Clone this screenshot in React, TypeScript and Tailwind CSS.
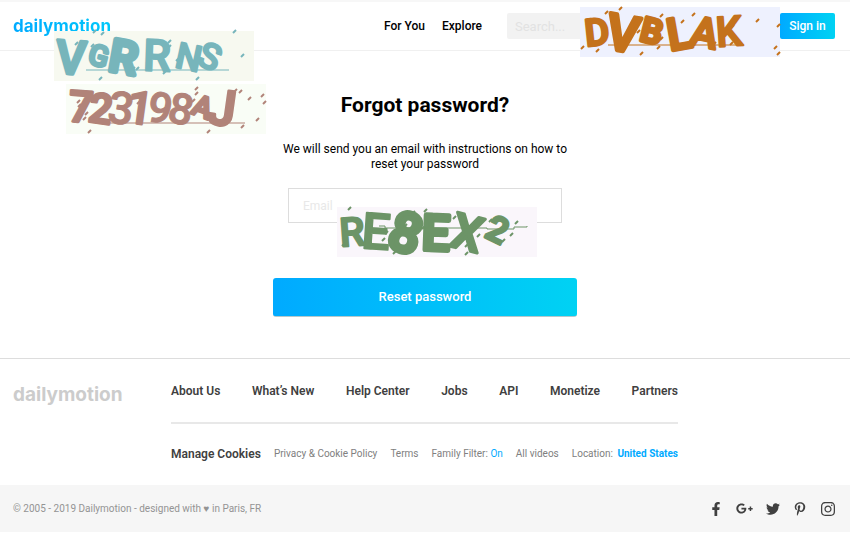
import React from "react";
import { FaFacebookF, FaGooglePlusG, FaInstagram, FaPinterestP, FaTwitter } from "react-icons/fa";

type Glyph = { c: string; x: number; y: number; size: number; turn: number; weight: number };

type Scribble = {
  place: string;
  background: string;
  color: string;
  label: string;
  glyphs: Glyph[];
  line: string;
  dots: [number, number][];
};

const scribbles: Scribble[] = [
  {
    place: "left-[54px] top-[31px]",
    background: "#f7f9f0",
    color: "#77b5bb",
    label: "VGRRNS",
    glyphs: [
      { c: "V", x: 17, y: 26, size: 50, turn: 4, weight: 3 },
      { c: "G", x: 45, y: 24, size: 32, turn: 14, weight: 3 },
      { c: "R", x: 70, y: 25, size: 50, turn: 10, weight: 5 },
      { c: "R", x: 103, y: 25, size: 46, turn: 2, weight: 2 },
      { c: "N", x: 135, y: 26, size: 38, turn: 12, weight: 2 },
      { c: "S", x: 156, y: 25, size: 38, turn: 22, weight: 2 },
    ],
    line: "M32 39H175",
    dots: [[40, 1], [48, 3], [22, 13], [28, 19], [38, 15], [46, 48], [79, 38], [83, 38], [110, 42], [115, 11], [115, 16], [123, 29], [188, 25], [180, 1], [143, 48], [165, 22]],
  },
  {
    place: "left-[66px] top-[84px]",
    background: "#f9fdf6",
    color: "#b18379",
    label: "7231984J",
    glyphs: [
      { c: "7", x: 15, y: 23, size: 46, turn: 4, weight: 3 },
      { c: "2", x: 35, y: 24, size: 44, turn: 8, weight: 3 },
      { c: "3", x: 55, y: 25, size: 46, turn: 8, weight: 1 },
      { c: "1", x: 74, y: 24, size: 48, turn: 8, weight: 2 },
      { c: "9", x: 94, y: 24, size: 44, turn: 12, weight: 1 },
      { c: "8", x: 115, y: 25, size: 44, turn: 12, weight: 1 },
      { c: "A", x: 137, y: 22, size: 32, turn: 20, weight: 3 },
      { c: "J", x: 156, y: 24, size: 52, turn: 8, weight: 3 },
    ],
    line: "M40 39H179",
    dots: [[12, 18], [13, 22], [18, 35], [20, 30], [23, 48], [72, 19], [130, 5], [130, 10], [127, 17], [142, 48], [162, 22], [169, 7], [174, 8], [183, 15], [196, 12], [198, 19], [191, 36], [176, 43]],
  },
  {
    place: "left-[580px] top-[7px]",
    background: "#eef1fe",
    color: "#c4721c",
    label: "DVBLAK",
    glyphs: [
      { c: "D", x: 17, y: 25, size: 40, turn: -6, weight: 3 },
      { c: "V", x: 43, y: 26, size: 54, turn: 10, weight: 4 },
      { c: "B", x: 72, y: 23, size: 38, turn: 14, weight: 4 },
      { c: "L", x: 99, y: 26, size: 48, turn: -10, weight: 4 },
      { c: "A", x: 125, y: 25, size: 44, turn: 12, weight: 3 },
      { c: "K", x: 149, y: 24, size: 44, turn: -4, weight: 2 },
    ],
    line: "M28 38H164",
    dots: [[2, 41], [17, 44], [26, 6], [40, 2], [58, 25], [61, 47], [78, 41], [81, 32], [81, 9], [102, 15], [113, 8], [134, 37], [152, 13], [152, 20], [151, 37], [177, 14], [198, 19], [195, 41], [198, 47]],
  },
  {
    place: "left-[337px] top-[207px]",
    background: "#faf6fb",
    color: "#6c9467",
    label: "RE8EX2",
    glyphs: [
      { c: "R", x: 15, y: 25, size: 42, turn: -4, weight: 2 },
      { c: "E", x: 39, y: 25, size: 52, turn: 4, weight: 2 },
      { c: "8", x: 69, y: 25, size: 60, turn: 18, weight: 5 },
      { c: "E", x: 99, y: 25, size: 54, turn: 2, weight: 5 },
      { c: "X", x: 130, y: 26, size: 52, turn: 14, weight: 3 },
      { c: "2", x: 161, y: 22, size: 38, turn: 26, weight: 3 },
    ],
    line: "M42 19H48V21H150V22H177V20H190V19",
    dots: [[12, 2], [6, 38], [40, 40], [46, 33], [49, 26], [57, 46], [73, 45], [68, 19], [77, 25], [76, 6], [88, 4], [95, 14], [86, 21], [117, 11], [115, 38], [129, 39], [129, 47], [141, 29], [153, 14], [159, 35], [166, 34], [174, 28], [179, 16]],
  },
];

function ScribbleImage({ art }: { art: Scribble }) {
  return (
    <svg
      role="img"
      aria-label={art.label}
      width="200"
      height="50"
      viewBox="0 0 200 50"
      className={`pointer-events-none absolute overflow-visible ${art.place}`}
    >
      <rect width="200" height="50" fill={art.background} />
      <g fill={art.color} stroke={art.color} strokeLinejoin="round" fontFamily="Roboto, sans-serif" fontWeight="500" textAnchor="middle">
        {art.glyphs.map((g, i) => (
          <text
            key={i}
            x={g.x}
            y={g.y + Math.round(g.size * 0.33)}
            fontSize={g.size - g.weight}
            strokeWidth={g.weight}
            transform={`rotate(${g.turn} ${g.x} ${g.y})`}
          >
            {g.c}
          </text>
        ))}
      </g>
      <path d={art.line} fill="none" stroke={art.color} strokeWidth="1" />
      {art.dots.map(([x, y], i) => (
        <path key={i} d={`M${x - 1} ${y + 1}l3-3`} stroke={art.color} strokeWidth="2" />
      ))}
    </svg>
  );
}

const mainLinks = ["About Us", "What’s New", "Help Center", "Jobs", "API", "Monetize", "Partners"];

const socials = [
  { name: "Facebook", Icon: FaFacebookF, size: 14 },
  { name: "Google Plus", Icon: FaGooglePlusG, size: 17 },
  { name: "Twitter", Icon: FaTwitter, size: 14 },
  { name: "Pinterest", Icon: FaPinterestP, size: 14 },
  { name: "Instagram", Icon: FaInstagram, size: 16 },
];

export default function App() {
  return (
    <div className="relative bg-white font-[Roboto,sans-serif] text-xs text-black">
      <header className="flex h-[51px] items-center border-t-2 border-b border-t-[#f7f7f7] border-b-[#f0f0f0] pr-[15px] pl-[13px]">
        <a href="#" className="bg-linear-to-r from-[#00aaff] to-[#00c8fa] bg-clip-text font-[Inter,sans-serif] text-[17px] leading-6 font-bold text-transparent">
          dailymotion
        </a>
        <nav className="ml-auto flex gap-[17px] font-medium">
          <a href="#">For You</a>
          <a href="#">Explore</a>
        </nav>
        <input
          type="search"
          aria-label="Search"
          placeholder="Search..."
          className="ml-[25px] h-[26px] w-[271px] rounded-xs bg-[#f2f2f2] px-2 text-[13px] placeholder:text-[#e2e2e2]"
        />
        <button className="ml-0.5 h-[26px] w-[55px] rounded-xs bg-linear-to-r from-[#00aaff] to-[#00d2f3] text-xs font-medium text-white">
          Sign in
        </button>
      </header>

      <main className="flex flex-col items-center px-4 pt-[38px] pb-[41px] text-center">
        <h1 className="text-[21px] leading-8 font-bold">Forgot password?</h1>
        <p className="mt-[21px] w-[300px] leading-[15px]">
          We will send you an email with instructions on how to reset your password
        </p>
        <form className="mt-4 flex flex-col items-center" onSubmit={(e) => e.preventDefault()}>
          <input
            type="email"
            aria-label="Email"
            placeholder="Email"
            className="h-[35px] w-[274px] border border-[#dddddd] px-[14px] text-xs placeholder:text-[#e8e8e8]"
          />
          <button className="mt-[55px] h-[39px] w-[304px] rounded-[3px] border-b border-[#b5c8cc] bg-linear-to-r from-[#00aaff] to-[#00d2f3] text-[13px] font-medium text-white">
            Reset password
          </button>
        </form>
      </main>

      <footer className="border-t border-[#dddddd]">
        <div className="flex pr-[172px] pl-[13px]">
          <a href="#" className="mt-6 w-[158px] shrink-0 font-[Inter,sans-serif] text-[19px] leading-6 font-bold text-[#cccccc]">
            dailymotion
          </a>
          <div className="min-w-0 flex-1 whitespace-nowrap">
            <nav className="flex h-[65px] items-center justify-between border-b-2 border-[#e8e8e8] font-semibold text-[#404040]">
              {mainLinks.map((link) => (
                <a key={link} href="#">{link}</a>
              ))}
            </nav>
            <div className="flex h-[61px] items-center justify-between pb-0.5 text-[10px] text-[#808080]">
              <a href="#" className="text-xs font-semibold text-[#404040]">Manage Cookies</a>
              <a href="#">Privacy &amp; Cookie Policy</a>
              <a href="#">Terms</a>
              <span>Family Filter: <a href="#" className="text-[#00aaff]">On</a></span>
              <a href="#">All videos</a>
              <span>Location: <a href="#" className="ml-0.5 font-bold text-[#00aaff]">United States</a></span>
            </div>
          </div>
        </div>
        <div className="flex h-[47px] items-center justify-between bg-[#f6f6f6] pr-[14px] pl-[13px]">
          <p className="text-[10px] text-[#949494]">© 2005 - 2019 Dailymotion - designed with ♥ in Paris, FR</p>
          <div className="flex items-center gap-[13px] text-[#404040]">
            {socials.map(({ name, Icon, size }) => (
              <a key={name} href="#" aria-label={name}><Icon size={size} /></a>
            ))}
          </div>
        </div>
      </footer>

      {scribbles.map((art) => (
        <ScribbleImage key={art.label} art={art} />
      ))}
    </div>
  );
}
